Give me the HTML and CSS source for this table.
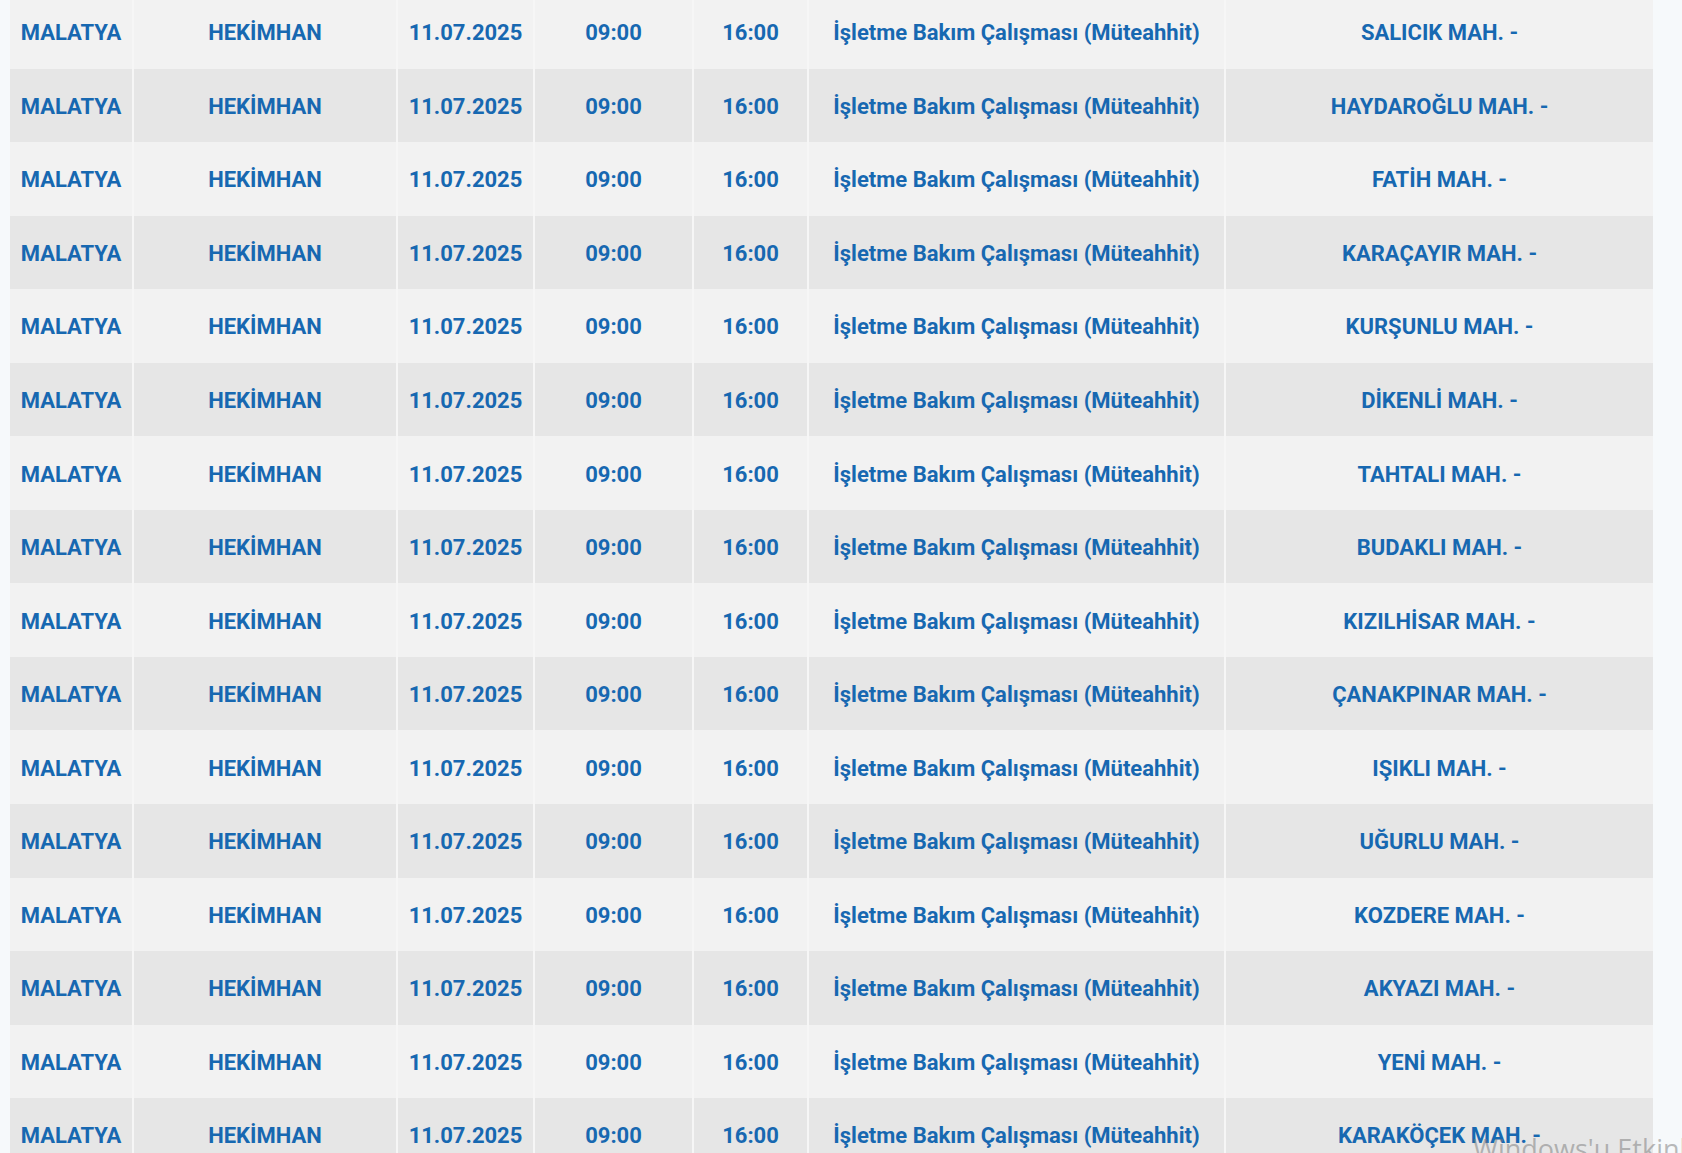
FILE: index.html
```html
<!DOCTYPE html>
<html lang="tr">
<head>
<meta charset="utf-8">
<title>Planlı Kesintiler</title>
<link rel="stylesheet" href="styles.css">
</head>
<body>
<div class="page">
<table class="outages">
<colgroup>
<col class="c-il"><col class="c-ilce"><col class="c-tarih"><col class="c-bas"><col class="c-bit"><col class="c-neden"><col class="c-yer">
</colgroup>
<tbody>
<tr><td>MALATYA</td><td>HEKİMHAN</td><td>11.07.2025</td><td>09:00</td><td>16:00</td><td>İşletme Bakım Çalışması (Müteahhit)</td><td>SALICIK MAH. -</td></tr>
<tr><td>MALATYA</td><td>HEKİMHAN</td><td>11.07.2025</td><td>09:00</td><td>16:00</td><td>İşletme Bakım Çalışması (Müteahhit)</td><td>HAYDAROĞLU MAH. -</td></tr>
<tr><td>MALATYA</td><td>HEKİMHAN</td><td>11.07.2025</td><td>09:00</td><td>16:00</td><td>İşletme Bakım Çalışması (Müteahhit)</td><td>FATİH MAH. -</td></tr>
<tr><td>MALATYA</td><td>HEKİMHAN</td><td>11.07.2025</td><td>09:00</td><td>16:00</td><td>İşletme Bakım Çalışması (Müteahhit)</td><td>KARAÇAYIR MAH. -</td></tr>
<tr><td>MALATYA</td><td>HEKİMHAN</td><td>11.07.2025</td><td>09:00</td><td>16:00</td><td>İşletme Bakım Çalışması (Müteahhit)</td><td>KURŞUNLU MAH. -</td></tr>
<tr><td>MALATYA</td><td>HEKİMHAN</td><td>11.07.2025</td><td>09:00</td><td>16:00</td><td>İşletme Bakım Çalışması (Müteahhit)</td><td>DİKENLİ MAH. -</td></tr>
<tr><td>MALATYA</td><td>HEKİMHAN</td><td>11.07.2025</td><td>09:00</td><td>16:00</td><td>İşletme Bakım Çalışması (Müteahhit)</td><td>TAHTALI MAH. -</td></tr>
<tr><td>MALATYA</td><td>HEKİMHAN</td><td>11.07.2025</td><td>09:00</td><td>16:00</td><td>İşletme Bakım Çalışması (Müteahhit)</td><td>BUDAKLI MAH. -</td></tr>
<tr><td>MALATYA</td><td>HEKİMHAN</td><td>11.07.2025</td><td>09:00</td><td>16:00</td><td>İşletme Bakım Çalışması (Müteahhit)</td><td>KIZILHİSAR MAH. -</td></tr>
<tr><td>MALATYA</td><td>HEKİMHAN</td><td>11.07.2025</td><td>09:00</td><td>16:00</td><td>İşletme Bakım Çalışması (Müteahhit)</td><td>ÇANAKPINAR MAH. -</td></tr>
<tr><td>MALATYA</td><td>HEKİMHAN</td><td>11.07.2025</td><td>09:00</td><td>16:00</td><td>İşletme Bakım Çalışması (Müteahhit)</td><td>IŞIKLI MAH. -</td></tr>
<tr><td>MALATYA</td><td>HEKİMHAN</td><td>11.07.2025</td><td>09:00</td><td>16:00</td><td>İşletme Bakım Çalışması (Müteahhit)</td><td>UĞURLU MAH. -</td></tr>
<tr><td>MALATYA</td><td>HEKİMHAN</td><td>11.07.2025</td><td>09:00</td><td>16:00</td><td>İşletme Bakım Çalışması (Müteahhit)</td><td>KOZDERE MAH. -</td></tr>
<tr><td>MALATYA</td><td>HEKİMHAN</td><td>11.07.2025</td><td>09:00</td><td>16:00</td><td>İşletme Bakım Çalışması (Müteahhit)</td><td>AKYAZI MAH. -</td></tr>
<tr><td>MALATYA</td><td>HEKİMHAN</td><td>11.07.2025</td><td>09:00</td><td>16:00</td><td>İşletme Bakım Çalışması (Müteahhit)</td><td>YENİ MAH. -</td></tr>
<tr><td>MALATYA</td><td>HEKİMHAN</td><td>11.07.2025</td><td>09:00</td><td>16:00</td><td>İşletme Bakım Çalışması (Müteahhit)</td><td>KARAKÖÇEK MAH. -</td></tr>
</tbody>
</table>
<div class="watermark">Windows'u Etkinleştir</div>
</div>
</body>
</html>
```

FILE: styles.css
```css
html, body {
  margin: 0;
  padding: 0;
  background: #f6f9fb;
  overflow: hidden;
}

.page {
  position: relative;
  width: 1682px;
  height: 1153px;
  overflow: hidden;
}

.outages {
  margin: -5px 0 0 10px;
  width: 1643px;
  table-layout: fixed;
  border-collapse: collapse;
  font-family: Roboto, "Liberation Sans", sans-serif;
  font-weight: 700;
  font-size: 22px;
  color: #1768b1;
}

.c-il { width: 123px; }
.c-ilce { width: 264px; }
.c-tarih { width: 137px; }
.c-bas { width: 159px; }
.c-bit { width: 115px; }
.c-neden { width: 417px; }
.c-yer { width: 428px; }

.outages tr {
  height: 73.55px;
  background: #f2f2f2;
}

.outages tr:nth-child(even) {
  background: #e6e6e6;
}

.outages td {
  padding: 2px 0 0;
  text-align: center;
  vertical-align: middle;
  white-space: nowrap;
  border-left: 2px solid #f6f6f6;
}

.outages td:first-child {
  border-left: none;
}

.watermark {
  position: absolute;
  left: 1473px;
  top: 1130px;
  font-family: "Open Sans", "Liberation Sans", sans-serif;
  font-size: 27px;
  font-weight: 400;
  color: rgba(120, 120, 120, 0.5);
  white-space: nowrap;
}
```
